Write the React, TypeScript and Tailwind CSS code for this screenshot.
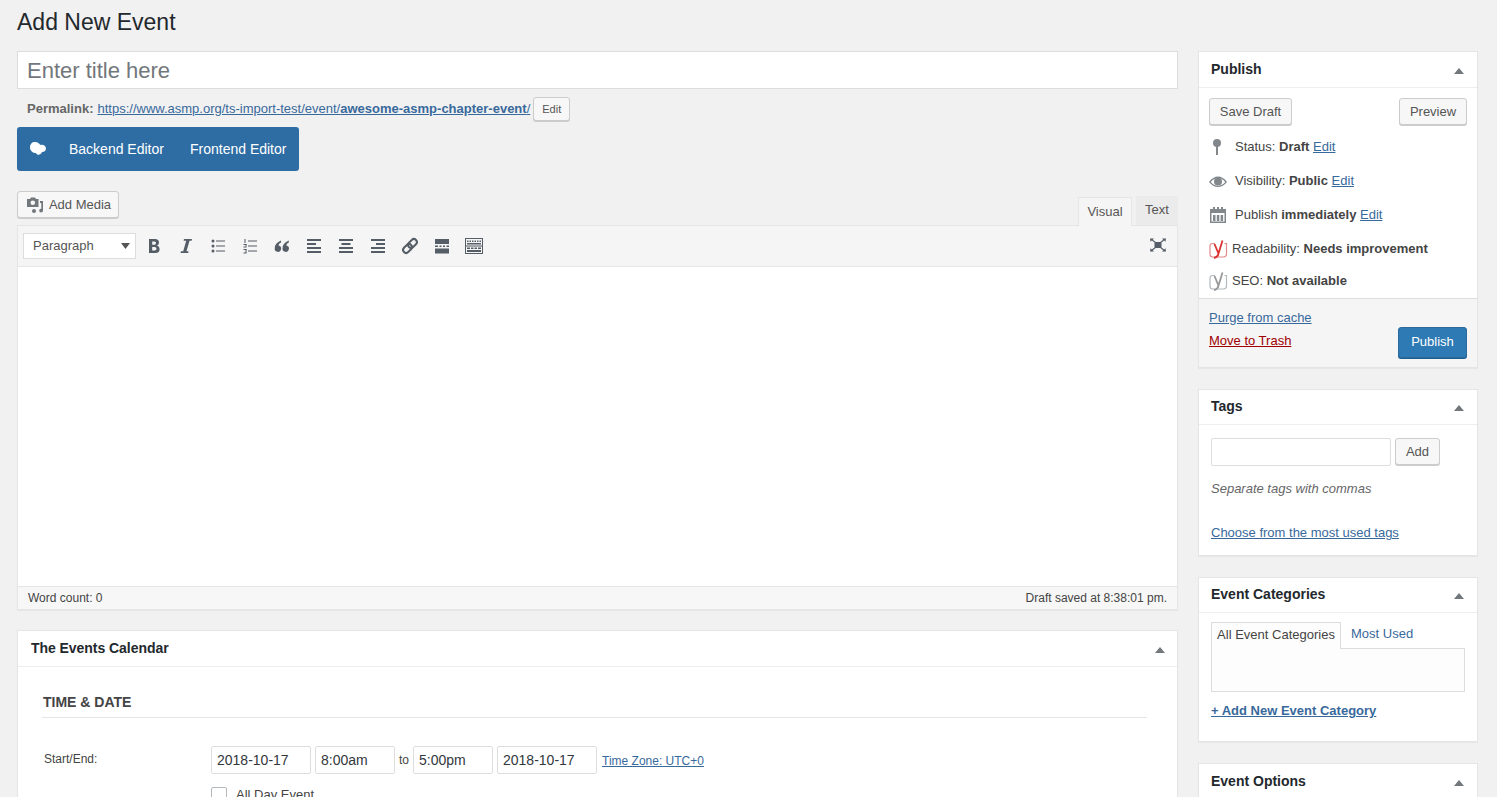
import React from "react";

const Arrow = () => (
  <svg width="10" height="6" viewBox="0 0 10 6" className="mt-[3px] block"><path d="M5 0 L10 6 L0 6 Z" fill="#72777c" /></svg>
);

const BoxHead = ({ title, h, cls = "" }: { title: string; h: string; cls?: string }) => (
  <div className={`flex items-center justify-between border-b border-[#eeeeee] pl-[12px] pr-[13px] ${h} ${cls}`}>
    <span className="text-[14px] font-bold text-[#23282d]">{title}</span>
    <Arrow />
  </div>
);

const Btn = ({ children, cls }: { children: React.ReactNode; cls: string }) => (
  <div className={`flex items-center justify-center rounded-[3px] border border-[#cccccc] bg-[#f7f7f7] text-[#555555] shadow-[0_1px_0_#cccccc] ${cls}`}>{children}</div>
);

const A = ({ children, cls = "" }: { children: React.ReactNode; cls?: string }) => (
  <a className={`text-[#38699c] underline ${cls}`}>{children}</a>
);

const Tb = ({ children }: { children: React.ReactNode }) => (
  <svg width="20" height="20" viewBox="0 0 20 20" className="block shrink-0" fill="#555d66">{children}</svg>
);

const Lines = ({ kind }: { kind: "l" | "c" | "r" }) => {
  const x2 = kind === "l" ? 3 : kind === "c" ? 5.500 : 8;
  return (
    <Tb>
      <rect x="3" y="3" width="14" height="2" />
      <rect x={x2} y="7" width="9" height="2" />
      <rect x="3" y="11" width="14" height="2" />
      <rect x="3" y="15" width="14" height="2" />
    </Tb>
  );
};

const Yoast = ({ color, box }: { color: string; box: string }) => (
  <svg width="19" height="19" viewBox="0 0 19 19" className="block shrink-0">
    <path d="M6 3.500 H3.500 Q1 3.500 1 6 V14 Q1 17 3.500 17 H14 Q17.500 17 17.500 14 V3.500 H15.500" fill="none" stroke={box} strokeWidth="1.200" />
    <path d="M5.500 4 L9.500 13.500 L13.500 0.500 M9.500 13.500 Q8.500 17.500 5 18" fill="none" stroke={color} strokeWidth="1.800" />
  </svg>
);

const Field = ({ v, w }: { v: string; w: string }) => (
  <div className={`flex h-[28px] items-center rounded-[2px] border border-[#dddddd] bg-white pl-[5px] text-[14px] text-[#32373c] ${w}`}>{v}</div>
);

export default function App() {
  return (
    <div className="h-[797px] w-[1497px] overflow-hidden bg-[#f1f1f1] pl-[17px] pr-[19px] font-['Liberation_Sans',Arial,sans-serif] text-[13px] text-[#444444]">
      <h1 className="flex h-[51px] items-start pt-[7px] text-[23px] leading-[30px] text-[#23282d]">Add New Event</h1>
      <div className="flex gap-[20px]">
        <div className="w-[1161px] shrink-0">
          <div className="flex h-[38px] items-center border border-[#dddddd] bg-white pl-[9px] pt-px text-[22px] text-[#72777c]">Enter title here</div>
          <div className="flex h-[38px] items-center pl-[10px] pt-[2px] text-[#666666]">
            <b className="mr-[4px]">Permalink:</b>
            <A>https://www.asmp.org/ts-import-test/event/<b>awesome-asmp-chapter-event</b>/</A>
            <Btn cls="ml-[3px] h-[24px] w-[37px] text-[11px]">Edit</Btn>
          </div>
          <div className="flex h-[44px] w-[282px] items-center rounded-[3px] bg-[#2e6da4] pl-[12px] text-[14px] text-white">
            <svg width="18" height="14" viewBox="0 0 18 14" className="block shrink-0" fill="#ffffff">
              <path d="M6 0 C9 0 11 2 11 3 C14 2 17 4 17 6.500 C17 9 15 10 13 10 C12 13 8 14 7 11 C4 11 1 9 1 5.500 C1 2 3 0 6 0 Z" />
            </svg>
            <span className="ml-[22px]">Backend Editor</span>
            <span className="ml-[26px]">Frontend Editor</span>
          </div>
          <div className="mt-[20px] flex h-[34px] items-start justify-between">
            <Btn cls="h-[27px] w-[102px] gap-[5px] pl-px">
              <svg width="18" height="18" viewBox="0 0 18 18" className="block" fill="#72777c">
                <path d="M1 3 H4 L5 1.500 H9 L10 3 H12.500 V11 H1 Z M6.800 4.500 A2.300 2.300 0 1 0 6.800 9.100 A2.300 2.300 0 1 0 6.800 4.500 Z" fillRule="evenodd" />
                <path d="M14 5 H17 V14.500 A1.900 1.900 0 1 1 15.300 12.700 V7 H14 Z" />
                <circle cx="8" cy="15" r="2" />
              </svg>
              <span className="text-[#555555]">Add Media</span>
            </Btn>
            <div className="flex h-[34px] items-end gap-[4px]">
              <div className="z-10 -mb-px flex h-[29px] w-[54px] items-center justify-center border border-b-0 border-[#e5e5e5] bg-[#f5f5f5] pb-[1px] text-[#555555]">Visual</div>
              <div className="flex h-[29px] w-[42px] items-center justify-center bg-[#ebebeb] pb-[1px] text-[#555555]">Text</div>
            </div>
          </div>
          <div className="border border-[#e5e5e5] bg-white shadow-[0_1px_1px_rgba(0,0,0,0.04)]">
            <div className="flex h-[41px] items-center justify-between border-b border-[#e5e5e5] bg-[#f5f5f5] pl-[5px] pr-[10px]">
              <div className="flex items-center">
                <div className="flex h-[26px] w-[113px] items-center justify-between border border-[#dddddd] bg-white pl-[9px] pr-[5px] text-[#555555]">
                  <span>Paragraph</span>
                  <svg width="9" height="6" viewBox="0 0 9 6" className="block"><path d="M0 0 H9 L4.500 6 Z" fill="#555555" /></svg>
                </div>
                <div className="ml-[8px] flex items-center gap-[12px]">
                  <Tb><path d="M5 3 H11 Q15 3 15 6.500 Q15 8.800 13 9.600 Q15.600 10.400 15.600 13 Q15.600 17 11.500 17 H5 Z M8.200 5.500 V8.700 H10.500 Q12 8.700 12 7.100 Q12 5.500 10.500 5.500 Z M8.200 11 V14.500 H10.800 Q12.500 14.500 12.500 12.700 Q12.500 11 10.800 11 Z" fillRule="evenodd" /></Tb>
                  <Tb><path d="M8 3 H16 L15.600 4.700 H13.500 L10.500 15.300 H12.600 L12.200 17 H4.500 L4.900 15.300 H7.200 L10.200 4.700 H7.600 Z" /></Tb>
                  <Tb>
                    <circle cx="5" cy="5" r="1.500" /><circle cx="5" cy="10" r="1.500" /><circle cx="5" cy="15" r="1.500" />
                    <rect x="8" y="4.500" width="9" height="1" /><rect x="8" y="9.500" width="9" height="1" /><rect x="8" y="14.500" width="9" height="1" />
                  </Tb>
                  <Tb>
                    <rect x="8" y="4.500" width="9" height="1" /><rect x="8" y="9.500" width="9" height="1" /><rect x="8" y="14.500" width="9" height="1" />
                    <rect x="4.500" y="3" width="1" height="4" /><rect x="3.500" y="8" width="3" height="1" /><rect x="5.500" y="8" width="1" height="2.500" /><rect x="3.500" y="10.500" width="3" height="1" /><rect x="3.500" y="13" width="3" height="1" /><rect x="5.500" y="13" width="1" height="4" /><rect x="3.500" y="16.500" width="3" height="1" />
                  </Tb>
                  <Tb><path d="M9 4.500 V6.500 Q6.500 7.500 6.500 9.500 A3.200 3.200 0 1 1 2.800 12 Q2.800 7 9 4.500 Z M16.800 4.500 V6.500 Q14.300 7.500 14.300 9.500 A3.200 3.200 0 1 1 10.600 12 Q10.600 7 16.800 4.500 Z" /></Tb>
                  <Lines kind="l" />
                  <Lines kind="c" />
                  <Lines kind="r" />
                  <Tb>
                    <g fill="none" stroke="#555d66" strokeWidth="2" transform="rotate(-45 10 10)">
                      <rect x="1.500" y="7" width="10" height="6" rx="3" />
                      <rect x="8.500" y="7" width="10" height="6" rx="3" />
                    </g>
                  </Tb>
                  <Tb><rect x="3" y="3" width="14" height="5" /><rect x="3" y="9.500" width="3" height="1.500" /><rect x="7.500" y="9.500" width="2" height="1.500" /><rect x="11" y="9.500" width="2" height="1.500" /><rect x="14.500" y="9.500" width="2.500" height="1.500" /><rect x="3" y="12.500" width="14" height="5" /></Tb>
                  <Tb>
                    <path d="M1 2 H19 V18 H1 Z M2 3 V9.500 H18 V3 Z M2 10.500 V17 H18 V10.500 Z" fillRule="evenodd" />
                    <path d="M3 4.500 H4.500 V6 H3 Z M5.500 4.500 H7 V6 H5.500 Z M8 4.500 H9.500 V6 H8 Z M10.500 4.500 H12 V6 H10.500 Z M13 4.500 H14.500 V6 H13 Z M15.500 4.500 H17 V6 H15.500 Z M3 7 H17 V8.500 H3 Z M3 11.500 H6 V13 H3 Z M7 11.500 H9.500 V13 H7 Z M10.500 11.500 H13 V13 H10.500 Z M14 11.500 H17 V13 H14 Z M3 14 H17 V16 H3 Z" />
                  </Tb>
                </div>
              </div>
              <svg width="18" height="14" viewBox="0 0 18 14" className="-mt-[3px] block" fill="#555d66">
                <rect x="5.500" y="4" width="7" height="6" />
                <path d="M1 0.500 H5 L3.800 1.700 L6.500 3.800 L5.500 4.500 L2.800 2.500 L1.500 3.800 Z M17 0.500 H13 L14.200 1.700 L11.500 3.800 L12.500 4.500 L15.200 2.500 L16.500 3.800 Z M1 13.500 H5 L3.800 12.300 L6.500 10.200 L5.500 9.500 L2.800 11.500 L1.500 10.200 Z M17 13.500 H13 L14.200 12.300 L11.500 10.200 L12.500 9.500 L15.200 11.500 L16.500 10.200 Z" />
              </svg>
            </div>
            <div className="h-[319px]" />
            <div className="flex h-[23px] items-center justify-between border-t border-[#e5e5e5] bg-[#f7f7f7] pl-[10px] pr-[10px] text-[12px] text-[#444444]">
              <span>Word count: 0</span>
              <span>Draft saved at 8:38:01 pm.</span>
            </div>
          </div>
          <div className="mt-[20px] border border-[#e5e5e5] bg-white shadow-[0_1px_1px_rgba(0,0,0,0.04)]">
            <div className="flex h-[36px] items-center justify-between border-b border-[#eeeeee] pl-[13px] pr-[12px]">
              <span className="text-[14px] font-bold tracking-[-0.05px] text-[#23282d]">The Events Calendar</span>
              <Arrow />
            </div>
            <div className="pl-[24px] pr-[30px] pt-[26px]">
              <div className="border-b border-[#e5e5e5] pb-[6px] pl-px text-[14px] font-bold leading-[18px] text-[#444444]">TIME &amp; DATE</div>
              <div className="mt-[28px] flex">
                <div className="w-[169px] pl-[2px] pt-[6px] text-[12px] leading-[14px]">Start/End:</div>
                <div>
                  <div className="flex items-center">
                    <Field v="2018-10-17" w="w-[100px]" />
                    <Field v="8:00am" w="ml-[4px] w-[80px]" />
                    <span className="w-[18px] text-center text-[12px]">to</span>
                    <Field v="5:00pm" w="w-[80px]" />
                    <Field v="2018-10-17" w="ml-[4px] w-[100px]" />
                    <A cls="ml-[5px] pt-[2px] text-[12px]">Time Zone: UTC+0</A>
                  </div>
                  <div className="mt-[11px] flex items-center">
                    <div className="h-[16px] w-[16px] rounded-[2px] border border-[#b4b9be] bg-white" />
                    <span className="ml-[9px]">All Day Event</span>
                  </div>
                </div>
              </div>
            </div>
          </div>
        </div>

        <div className="w-[280px] shrink-0">
          <div className="border border-[#e5e5e5] bg-white shadow-[0_1px_1px_rgba(0,0,0,0.04)]">
            <BoxHead title="Publish" h="h-[36px]" />
            <div className="px-[10px] pt-[10px]">
              <div className="flex justify-between">
                <Btn cls="h-[27px] w-[83px]">Save Draft</Btn>
                <Btn cls="h-[27px] w-[68px]">Preview</Btn>
              </div>
              <div className="mt-[5px] flex h-[34px] items-center">
                <svg width="20" height="20" viewBox="0 0 20 20" className="block shrink-0" fill="#82878c">
                  <circle cx="8" cy="6" r="4" /><rect x="7" y="8" width="2" height="10" />
                </svg>
                <span className="ml-[6px]">Status: <b>Draft</b> <A>Edit</A></span>
              </div>
              <div className="flex h-[34px] items-center">
                <svg width="20" height="20" viewBox="0 0 20 20" className="-ml-px block shrink-0" fill="#82878c">
                  <path d="M1 11 Q5 5.500 10 5.500 Q15 5.500 19 11 Q15 16 10 16 Q5 16 1 11 Z M2.800 11 Q6 14.800 10 14.800 Q14 14.800 17.200 11 Q14 7 10 7 Q6 7 2.800 11 Z" fillRule="evenodd" />
                  <circle cx="10" cy="10.500" r="4" />
                </svg>
                <span className="ml-[7px]">Visibility: <b>Public</b> <A>Edit</A></span>
              </div>
              <div className="flex h-[34px] items-center">
                <svg width="20" height="20" viewBox="0 0 20 20" className="block shrink-0" fill="#82878c">
                  <path d="M1 4 H4 V2 H6 V4 H8 V2 H10 V4 H12 V2 H14 V4 H17 V18 H1 Z M2.500 8 V16.500 H15.500 V8 Z" fillRule="evenodd" />
                  <rect x="4" y="10" width="2.500" height="6" /><rect x="7.800" y="10" width="2.500" height="6" /><rect x="11.600" y="10" width="2.500" height="6" />
                </svg>
                <span className="ml-[6px]">Publish <b>immediately</b> <A>Edit</A></span>
              </div>
              <div className="flex h-[34px] items-center">
                <Yoast color="#dc3232" box="#e28a8a" />
                <span className="ml-[4px]">Readability: <b>Needs improvement</b></span>
              </div>
              <div className="flex h-[32px] items-center pb-[2px]">
                <Yoast color="#999999" box="#b4b9be" />
                <span className="ml-[4px]">SEO: <b>Not available</b></span>
              </div>
            </div>
            <div className="flex h-[69px] justify-between border-t border-[#dddddd] bg-[#f5f5f5] px-[10px]">
              <div className="pt-[11px] leading-[15px]">
                <div><A>Purge from cache</A></div>
                <div className="mt-[8px]"><a className="text-[#a00000] underline">Move to Trash</a></div>
              </div>
              <div className="pt-[28px]">
                <div className="flex h-[31px] w-[69px] items-center justify-center rounded-[3px] border border-[#2a6a9c] bg-[#2e7ab5] pb-[2px] text-white shadow-[0_1px_0_#1f5f8f]">Publish</div>
              </div>
            </div>
          </div>

          <div className="mt-[21px] h-[167px] border border-[#e5e5e5] bg-white shadow-[0_1px_1px_rgba(0,0,0,0.04)]">
            <BoxHead title="Tags" h="h-[35px]" cls="pb-[2px]" />
            <div className="px-[12px] pt-[13px]">
              <div className="flex gap-[4px]">
                <div className="h-[28px] w-[180px] rounded-[2px] border border-[#dddddd] bg-white" />
                <Btn cls="h-[27px] w-[45px]">Add</Btn>
              </div>
              <div className="mt-[15px] italic leading-[16px] text-[#666666]">Separate tags with commas</div>
              <div className="mt-[28px] leading-[16px]"><A>Choose from the most used tags</A></div>
            </div>
          </div>

          <div className="mt-[21px] h-[165px] border border-[#e5e5e5] bg-white shadow-[0_1px_1px_rgba(0,0,0,0.04)]">
            <BoxHead title="Event Categories" h="h-[35px]" cls="pb-[2px]" />
            <div className="px-[12px] pt-[9px]">
              <div className="flex h-[26px] items-stretch">
                <div className="z-10 -mb-px flex w-[130px] items-center justify-center border border-b-0 border-[#dddddd] bg-[#fdfdfd] pb-[3px] text-[#444444]">All Event Categories</div>
                <div className="ml-[10px] flex items-center pb-[2px] text-[#38699c]">Most Used</div>
              </div>
              <div className="h-[44px] w-[254px] border border-[#dddddd] bg-[#fdfdfd]" />
              <div className="mt-[11px] font-bold leading-[16px]"><A>+ Add New Event Category</A></div>
            </div>
          </div>

          <div className="mt-[21px] border border-[#e5e5e5] bg-white shadow-[0_1px_1px_rgba(0,0,0,0.04)]">
            <BoxHead title="Event Options" h="h-[35px]" />
            <div className="h-[40px]" />
          </div>
        </div>
      </div>
    </div>
  );
}
